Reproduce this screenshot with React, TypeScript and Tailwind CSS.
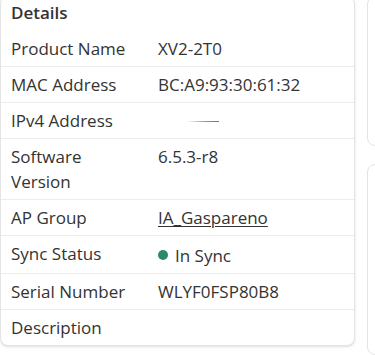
const ROWS: { label: string; value?: React.ReactNode }[] = [
  { label: "Product Name", value: "XV2-2T0" },
  { label: "MAC Address", value: "BC:A9:93:30:61:32" },
  {
    label: "IPv4 Address",
    value: (
      <span className="mt-[13px] ml-[29px] block h-px w-[32px] bg-gradient-to-r from-transparent via-gray-400 to-gray-500" />
    ),
  },
  { label: "Software Version", value: "6.5.3-r8" },
  {
    label: "AP Group",
    value: <span className="underline underline-offset-2">IA_Gaspareno</span>,
  },
  {
    label: "Sync Status",
    value: (
      <span className="inline-flex items-center gap-[7px]">
        <span className="h-[10px] w-[10px] rounded-full bg-[#2b8a6a]" />
        In Sync
      </span>
    ),
  },
  { label: "Serial Number", value: "WLYF0FSP80B8" },
  { label: "Description" },
];

export default function App() {
  return (
    <div
      className="flex h-[355px] w-[375px] gap-3 overflow-hidden bg-white text-[17px] text-[#333]"
      style={{ fontFamily: "'Open Sans', Lato, sans-serif" }}
    >
      <section className="-mt-1 h-fit w-[355px] shrink-0 rounded-lg border border-[#e4e4e4] bg-white shadow-sm">
        <h2 className="px-[10px] pt-1 pb-1.5 leading-6 font-semibold">Details</h2>
        {ROWS.map((r, i) => (
          <div
            key={r.label}
            className={`flex px-[10px] py-[5px] leading-[25px] ${i > 0 ? "border-t border-[#ececec]" : ""}`}
          >
            <div className="w-[147px] shrink-0 pr-4">{r.label}</div>
            <div className="flex-1">{r.value}</div>
          </div>
        ))}
      </section>
      <div className="-mt-1 flex w-[200px] shrink-0 flex-col gap-[18px]">
        <div className="h-[157px] rounded-lg border border-[#e4e4e4]" />
        <div className="h-[200px] rounded-lg border border-[#e4e4e4]" />
      </div>
    </div>
  );
}
